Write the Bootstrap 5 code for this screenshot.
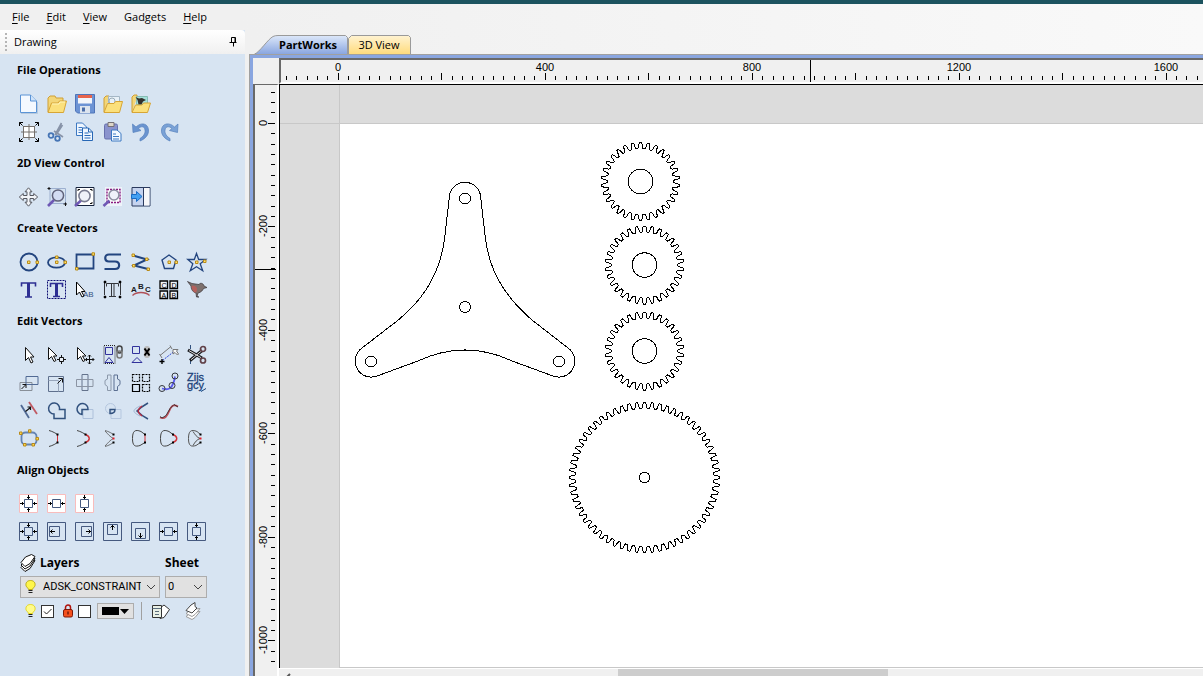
<!DOCTYPE html>
<html lang="en">
<head>
<meta charset="utf-8">
<meta name="viewport" content="width=device-width, initial-scale=1">
<title>PartWorks</title>
<link href="https://cdn.jsdelivr.net/npm/bootstrap@5.3.0/dist/css/bootstrap.min.css" rel="stylesheet">
<style>
  body { font: 11px/16px "Open Sans", "Noto Sans", sans-serif; color: #000; background: #f0f0f0; }
  .titlestrip { height: 4px; background: #1c535f; }
  .menubar { height: 26px; padding-left: 12px; gap: 17px; background: linear-gradient(90deg, #f0f0f0 20%, #f9f9f9); }
  .menubar a { color: #000; text-decoration: none; }
  .menubar u { text-underline-offset: 2px; }
  .sidepanel { width: 245px; background: #d7e4f2; }
  .panelhead { height: 24px; padding: 0 7px 0 5px; background: linear-gradient(#fff, #f0f0f0); border-top-right-radius: 4px; }
  .grip { width: 2px; height: 18px; margin-right: 7px; background: repeating-linear-gradient(#b5b5b5 0 2px, transparent 2px 4px); }
  .plainbtn { border: 0; background: none; padding: 0; }
  .toolset h2 { font-size: 11px; line-height: 16px; font-weight: 700; margin: 0 0 12px; padding-left: 17px; }
  .toolset { padding-top: 8px; }
  .toolset + .toolset { padding-top: 9px; }
  .toolgrid { display: grid; grid-template-columns: repeat(7, 28px); padding-left: 15px; }
  .toolgrid button { border: 0; background: none; padding: 4px; width: 28px; height: 28px; line-height: 0; }
  .toolgrid button:hover { background: #c3d8f0; }
  svg { display: block; overflow: visible; }
  .toolgrid svg { width: 20px; height: 20px; fill: none; stroke-width: 1; }
  .layerbox { padding: 8px 38px 0 20px; }
  .layerbox label.cap { font-size: 12px; font-weight: 700; }
  .combo { height: 22px; padding: 0 18px 0 2px; font: 11px/20px Roboto, sans-serif; border: 1px solid #adadad; border-radius: 0; background-color: #e1e1e1; background-image: url("data:image/svg+xml,%3Csvg xmlns='http://www.w3.org/2000/svg' viewBox='0 0 10 6'%3E%3Cpath d='M1 1l4 4 4-4' fill='none' stroke='%23444'/%3E%3C/svg%3E"); background-size: 10px 6px; background-position: right 3px center; color: #000; text-overflow: clip; }
  .combo.layername { padding-left: 22px; }
  .bulb { position: absolute; left: 5px; top: 4px; pointer-events: none; }
  input.tick[type=checkbox] { width: 13px; height: 13px; margin: 0; border: 1px solid #333; border-radius: 0; background-color: #fff; }
  input.tick[type=checkbox]:checked { background-color: #fff; border-color: #333; background-size: 11px; background-image: url("data:image/svg+xml,%3Csvg xmlns='http://www.w3.org/2000/svg' viewBox='0 0 11 11'%3E%3Cpath d='M2 5.5l2.500 2.500L9.500 3' fill='none' stroke='%23222'/%3E%3C/svg%3E"); }
  .swatch { width: 37px; height: 16px; padding: 0 4px; background: #e1e1e1; border: 1px solid #adadad; }
  .swatch i { width: 17px; height: 8px; background: #000; }
  .divider { width: 1px; height: 18px; background: #a0a0a0; }
  .splitter { width: 4px; background: #f0f0f0; }
  .tabstrip { height: 24px; padding-left: 5px; background: linear-gradient(90deg, #f0f0f0, #f9f9f9); }
  .doctab { position: relative; height: 19px; line-height: 19px; border: 0; background: none; padding: 0; color: #000; }
  .doctab svg { position: absolute; left: 0; top: 0; z-index: -1; }
  .tabstrip, .doctab { isolation: isolate; }
  .doctab.current { width: 94px; padding-left: 14px; font-weight: 700; }
  .doctab.other { width: 62px; }
  .docframe { border-top: 1px solid #a0a0a0; border-left: 1px solid #a0a0a0; background: #8aa6e0; padding: 3px 0 0 3px; }
  .sheetgrid { display: grid; grid-template-columns: 26px minmax(0, 1fr); grid-template-rows: 26px minmax(0, 1fr) 8px; background: #f0f0f0; }
  .hruler { border-top: 2px solid #696969; border-left: 2px solid #696969; border-bottom: 2px solid #fff; overflow: hidden; }
  .vruler { border-top: 1px solid #696969; border-left: 2px solid #696969; border-right: 2px solid #fff; overflow: hidden; grid-row: span 2; }
  .hruler svg, .vruler svg, .canvas svg { width: 100%; height: 100%; overflow: hidden; }
  .rulertext { font: 11px "Liberation Sans", sans-serif; }
  .canvas { border-top: 1px solid #000; border-left: 1px solid #000; background: #dcdcdc; overflow: hidden; }
  .hscroll { background: #f0f0f0; border-top: 1px solid #fff; display: grid; grid-template-columns: 339px 270px 1fr; }
  .hscroll .thumb { background: #cdcdcd; border: 0; padding: 0; }
</style>
</head>
<body class="vh-100 d-flex flex-column overflow-hidden">
<div class="titlestrip flex-shrink-0"></div>
<nav class="menubar d-flex align-items-center flex-shrink-0">
  <a href="#"><u>F</u>ile</a><a href="#"><u>E</u>dit</a><a href="#"><u>V</u>iew</a><a href="#">Gadgets</a><a href="#"><u>H</u>elp</a>
</nav>
<div class="d-flex flex-grow-1" style="min-height:0">
  <aside class="sidepanel flex-shrink-0 overflow-hidden">
    <div class="panelhead d-flex align-items-center">
      <span class="grip"></span><span class="me-auto">Drawing</span>
      <button class="plainbtn" aria-label="Pin"><svg width="9" height="10" fill="none" stroke="#000"><path d="M2.500 0.500h4v5M2.500 0.500v5M0.500 5.500h7M4.500 5.500v4"/><path d="M6 1v5" /></svg></button>
    </div>

    <section class="toolset"><h2>File Operations</h2><div class="toolgrid">
      <button aria-label="New"><svg viewBox="0 0 20 20"><path d="M1.500 1h10l6 6v11.500h-16z" fill="#f4f9ff" stroke="#5b94d6"/><path d="M11.500 1v6h6" fill="#cfe3fa" stroke="#5b94d6"/><path d="M2 19.500h16.500V8" stroke="#a9bdd4" opacity=".7"/></svg></button>
      <button aria-label="Open"><svg viewBox="0 0 20 20"><path d="M1 18V4l2-2h5l1 2h7v3" fill="#f3d678" stroke="#cf9f35"/><path d="M1 18.500L4.500 9H11l1.500-2H19.500L16.500 18.500z" fill="#fbe07c" stroke="#d7a535"/><path d="M5 10h7l1-2h5" stroke="#fff3b8"/></svg></button>
      <button aria-label="Save"><svg viewBox="0 0 20 20"><path d="M.5 .5h19v18.500h-17l-2-2z" fill="#6c93d4" stroke="#4f74b8"/><path d="M3 1h14v8.500H3z" fill="#f2f5fa"/><path d="M3 1h14v3H3z" fill="#e8644c"/><path d="M5 12h10v7H5z" fill="#dce4ee"/><path d="M7 13.500h3v4H7z" fill="#4b6da8"/></svg></button>
      <button aria-label="Import vectors"><svg viewBox="0 0 20 20"><path d="M1 18V4l2-2h3v3" fill="#f3d678" stroke="#cf9f35"/><path d="M5.500 2.500h11v8h-11z" fill="#e8f1f8" stroke="#a5b7c6"/><circle cx="9" cy="7" r="3" stroke="#9badba"/><path d="M1 18.500L4.500 9.500H11l1.500-2H19.500L16.500 18.500z" fill="#fbe07c" stroke="#d7a535"/></svg></button>
      <button aria-label="Import bitmap"><svg viewBox="0 0 20 20"><path d="M1 18V3l2-2h3v3" fill="#f3d678" stroke="#cf9f35"/><path d="M5.500 2.500h11v8h-11z" fill="#a4dfd9" stroke="#86bdb5"/><path d="M4.500 3l3.500 1.500 3-.5 4 2-3 1.500-1.500 3h-3L6.500 6z" fill="#33302c"/><path d="M1 18.500L4.500 11H11l1.500-2H19.500L16.500 18.500z" fill="#fbe07c" stroke="#d7a535"/></svg></button>
    </div><div class="toolgrid">
      <button aria-label="Job setup"><svg viewBox="0 0 20 20"><path d="M4.500 4.500h11v11h-11z" fill="#fff"/><path d="M4.500 4v12M10 2v16M15.500 4v12M4 4.500h12M2 10h16M4 15.500h12" stroke="#75706c"/><path d="M.5 4V.5H4M.5 .5l3 3M16 .5h3.500V4M19.500 .5l-3 3M.5 16v3.500H4M.5 19.500l3-3M16 19.500h3.500V16M19.500 19.500l-3-3" stroke="#000"/></svg></button>
      <button aria-label="Cut"><svg viewBox="0 0 20 20"><path d="M14.500 1L8 13M15.500 3L9 13M7 9l9 6" stroke="#8793a8" stroke-width="1.600"/><circle cx="4" cy="13.500" r="2.400" stroke="#4675b5" stroke-width="1.800"/><circle cx="10.500" cy="16.500" r="2.300" stroke="#4675b5" stroke-width="1.800"/></svg></button>
      <button aria-label="Copy"><svg viewBox="0 0 20 20"><path d="M1.500 1h6l4 4v8.500h-10z" fill="#eef6ff" stroke="#3c78c2"/><path d="M3.500 5.500h4M3.500 8h6M3.500 10.500h6" stroke="#3c78c2"/><path d="M7.500 6h6l4 4v8.500h-10z" fill="#eef6ff" stroke="#2767b5"/><path d="M13.500 6v4h4M9.500 11h4M9.500 13.500h6M9.500 16h6" stroke="#2767b5"/></svg></button>
      <button aria-label="Paste"><svg viewBox="0 0 20 20"><rect x="1.500" y="2" width="13" height="15" rx="1.500" fill="#8a93cd" stroke="#6770ad"/><path d="M5 .5h6v4H5z" fill="#ddd6c9" stroke="#746f75"/><path d="M8.500 8h5.500l4 3.500v7.500H8.500z" fill="#f4f9ff" stroke="#3c78c2"/><path d="M10 12h3M10 14.500h6M10 17h6" stroke="#3c78c2"/></svg></button>
      <button aria-label="Undo"><svg viewBox="0 0 20 20"><path d="M1.500 2l.5 8.500 8-2-2.500-2C10 4 13.500 4 14 8c.5 4-2 6.500-5 8.500v2.500C14 17 18 13 17.500 8 17 1 10 0 5 5z" fill="#6a94d0" stroke="#5681bd" stroke-width=".7"/></svg></button>
      <button aria-label="Redo"><svg viewBox="0 0 20 20"><path d="M19 2L18.500 10.500l-8-2 2.500-2C10.500 4 6.500 4 6 8c-.5 4 2 6.500 5 8.500v2.500C6 17 2 13 2.500 8 3 1 10.500 0 15.500 5z" fill="#7aa2d6" stroke="#5681bd" stroke-width=".7"/></svg></button>
    </div></section>

    <section class="toolset"><h2>2D View Control</h2><div class="toolgrid">
      <button aria-label="Pan"><svg viewBox="0 0 20 20"><path fill="#f2f4f8" stroke="#55575f" d="M9.500 .8l3.500 4h-2v3.700h3.700v-2l4 3.500-4 3.500v-2H11v3.700h2l-3.500 4-3.500-4h2v-3.700H4.300v2l-4-3.500 4-3.500v2H8V4.800H6z"/></svg></button>
      <button aria-label="Zoom"><svg viewBox="0 0 20 20"><path d="M3 1.500h15.500v15H3z" stroke="#9db0d0"/><path d="M.5 1.500h3M2 0v3M16.500 17h3.500M18.500 15.500v3.500" stroke="#111"/><path d="M7 13l-6 6" stroke="#6e58b5" stroke-width="2.600"/><circle cx="11" cy="8.500" r="5.600" fill="#d3dcf2" stroke="#60627a" stroke-width="1.500"/></svg></button>
      <button aria-label="Zoom to drawing"><svg viewBox="0 0 20 20"><path d="M1 .5h18v18H1z" fill="#fff" stroke="#16233d"/><path d="M3 2.500h2M15 2.500h2M3 4V2.500M17 4V2.500M17 15v1.500h-2" stroke="#111"/><path d="M6 13.500l-6 5.500" stroke="#6e58b5" stroke-width="2.600"/><circle cx="9.500" cy="9" r="5.600" fill="#eff2fa" stroke="#7a7d92" stroke-width="1.600"/></svg></button>
      <button aria-label="Zoom to selection"><svg viewBox="0 0 20 20"><path d="M2 0h17v19H2z" fill="#eef3fa"/><path d="M4 2.500h13v13H4z" fill="#fff" stroke="#8b1a80" stroke-width="1.400" stroke-dasharray="2 1"/><path d="M6.500 13.500l-6 5.500" stroke="#6e58b5" stroke-width="2.600"/><circle cx="11" cy="8" r="5" fill="#eff2fa" stroke="#8c8fa2" stroke-width="1.600"/></svg></button>
      <button aria-label="Toggle view"><svg viewBox="0 0 20 20"><path d="M1 .5h18v18.500H1z" fill="#c5d3ef" stroke="#2a3a5e"/><path d="M12 1h6.500v17.500H12z" fill="#f7f7f9"/><path d="M12.500 1v18" stroke="#2a3a5e"/><path d="M.5 7.500h5V4.500l5.500 5-5.500 5v-3h-5z" fill="#43a0f2" stroke="#1b6cc4"/></svg></button>
    </div></section>

    <section class="toolset"><h2>Create Vectors</h2><div class="toolgrid">
      <button aria-label="Circle"><svg viewBox="0 0 20 20"><circle cx="10" cy="10" r="8.500" stroke="#23457f" stroke-width="1.800"/><path d="M8.500 9h2.500v2.500H8.500zM17 9h2.500v2.500H17z" fill="#ffe36b" stroke="#b88a19"/></svg></button>
      <button aria-label="Ellipse"><svg viewBox="0 0 20 20"><ellipse cx="9.500" cy="10.500" rx="8.500" ry="5.200" stroke="#23457f" stroke-width="1.800"/><path d="M8.500 9h2.500v2.500H8.500zM17 9h2.500v2.500H17zM8.500 4H11v2.500H8.500z" fill="#ffe36b" stroke="#b88a19"/></svg></button>
      <button aria-label="Rectangle"><svg viewBox="0 0 20 20"><path d="M1.500 2.500h17v14h-17z" stroke="#23457f" stroke-width="1.800"/><path d="M17 .8h2.500v2.500H17zM.5 15.500H3V18H.5z" fill="#ffe36b" stroke="#b88a19"/></svg></button>
      <button aria-label="Polyline"><svg viewBox="0 0 20 20"><path d="M18 2.500H6C1 2.500 1 9.500 6 9.500h6c5.500 0 5.500 7.500 0 7.500H1.500" stroke="#23457f" stroke-width="2.200"/></svg></button>
      <button aria-label="Curve"><svg viewBox="0 0 20 20"><path d="M2 3.500L16 7.500 3 13.500l14 3.500" stroke="#23457f" stroke-width="2"/><path d="M1 2h2.500v2.500H1zM14.500 6H17v2.500h-2.500zM1.500 12.500H4V15H1.500zM16 16h2.500v2.500H16z" fill="#ffe36b" stroke="#b88a19"/></svg></button>
      <button aria-label="Polygon"><svg viewBox="0 0 20 20"><path d="M10 3l7 5-2.500 8.500h-9L3 8z" stroke="#23457f" stroke-width="1.400"/><path d="M9 9h2.500v2.500H9zM16 9h2.500v2.500H16z" fill="#ffe36b" stroke="#b88a19"/></svg></button>
      <button aria-label="Star"><svg viewBox="0 0 20 20"><path d="M9.500 1.500l2.200 6h7l-5.500 4.200 2.500 7-6.200-4-6.200 4 2.500-7L.8 7.500h6.500z" stroke="#23457f" stroke-width="1.300"/><path d="M8.500 9H11v2.500H8.500zM16.500 8H19v2.500h-2.500z" fill="#ffe36b" stroke="#b88a19"/></svg></button>
      <button aria-label="Text"><svg viewBox="0 0 20 20"><path d="M2.500 6.500V3h14v3.500M6 17h7" stroke="#2e2f93" stroke-width="1.600"/><path d="M9.500 3v14" stroke="#2e2f93" stroke-width="3"/></svg></button>
      <button aria-label="Text in box"><svg viewBox="0 0 20 20"><path d="M.5 .5h18v18H.5z" stroke="#0c0c72" stroke-dasharray="2 1"/><path d="M3.500 7V3.500h12V7M9.500 3v13M6 16.500h7" stroke="#2e2f93" stroke-width="1.600"/><path d="M9.500 3v13" stroke="#2e2f93" stroke-width="3"/></svg></button>
      <button aria-label="Edit text"><svg viewBox="0 0 20 20"><text x="8" y="17" font-family="Liberation Sans, sans-serif" font-size="8" fill="#33507f">AB</text><path d="M1.500 2v13l3-3 2.500 5 2-1-2.500-4.500H10z" fill="#fff" stroke="#000"/></svg></button>
      <button aria-label="Transform text"><svg viewBox="0 0 20 20"><path d="M3.500 6.500V3.500h12v3M8.500 4v12M11 4v12M6 16.500h7M1.500 3v12M17.500 3v12" stroke="#34363b"/><path d="M1 1h2v2H1zM16 1h2v2h-2zM1 16h2v2H1zM16 16h2v2h-2z" fill="#000" stroke="#000" stroke-width=".5"/></svg></button>
      <button aria-label="Text on curve"><svg viewBox="0 0 20 20"><g font-family="Liberation Sans, sans-serif" font-size="8" font-weight="700" fill="#1b1b1e"><text x="0" y="12">A</text><text x="7" y="9">B</text><text x="14" y="12">C</text></g><path d="M1.500 15.500c4-4 13-4 17 0" stroke="#b05058" stroke-width="1.300"/></svg></button>
      <button aria-label="Text blocks"><svg viewBox="0 0 20 20"><path d="M1 1h7.500v7.500H1zM11 1h7.500v7.500H11zM1 11h7.500v7.500H1zM11 11h7.500v7.500H11z" stroke="#000" stroke-width="1.300" fill="#eef3fa"/><g font-family="Liberation Sans, sans-serif" font-size="7" fill="#000"><text x="2.500" y="7.500">C</text><text x="12.500" y="7.500">D</text><text x="2.500" y="17.500">A</text><text x="12.500" y="17.500">B</text></g></svg></button>
      <button aria-label="Clipart"><svg viewBox="0 0 20 20"><path d="M.5 1.500L5 3.500l7 1C13 2.500 16.500 3 17 6l3 1.500-3.500 1C16 10 14 12.500 11 13l-1 3.500 2 .5H9.500l-.5-4C5 12 4 8 4 6z" fill="#7d706d" stroke="#39353a" stroke-width=".7"/><path d="M4.500 6C8 5 10.500 7 10 10s-2 3-3 2-2.500-3-2.500-6z" fill="#b5605c"/></svg></button>
    </div></section>

    <section class="toolset"><h2>Edit Vectors</h2><div class="toolgrid">
      <button aria-label="Select"><svg viewBox="0 0 20 20"><path d="M6.500 2.500v13l3-3 2.500 5.500 2-1-2.500-5H15z" fill="#fff" stroke="#111"/></svg></button>
      <button aria-label="Edit nodes"><svg viewBox="0 0 20 20"><path d="M1.500 2.500v12l3-3 2.500 5 2-1-2.500-4.500H10z" fill="#fff" stroke="#111"/><path d="M14.500 10v9M10 14.500h9" stroke="#111"/><path d="M12.500 12.500h4v4h-4z" fill="#e8eef6" stroke="#111"/></svg></button>
      <button aria-label="Transform"><svg viewBox="0 0 20 20"><path d="M2.500 2.500v12l3-3 2.500 5 2-1-2.500-4.500H11z" fill="#fff" stroke="#111"/><path d="M14.500 10v9M10.500 14.500h8.500M13 11.500l1.500-1.500 1.500 1.500M13 17.500l1.500 1.500 1.500-1.500M12 13l-1.500 1.500L12 16M17.500 13l1.500 1.500-1.500 1.500" stroke="#111"/></svg></button>
      <button aria-label="Group"><svg viewBox="0 0 20 20"><path d="M1 .5h11v18H1z" stroke="#222" stroke-dasharray="1 1"/><path d="M2.500 2.500h7v7h-7zM6 12.500L2 17.500h8z" stroke="#32329c"/><rect x="14" y="1" width="5" height="7" rx="2.500" stroke="#444" stroke-width="1.500"/><rect x="14" y="6" width="5" height="7" rx="2.500" stroke="#777" stroke-width="1.500"/></svg></button>
      <button aria-label="Ungroup"><svg viewBox="0 0 20 20"><path d="M1.500 1.500h7v7h-7zM6 12.500l-5 5h10z" stroke="#32329c"/><rect x="13" y="1" width="6" height="12" rx="3" fill="#bbb"/><path d="M13.500 3.500l5 7M18.500 3.500l-5 7" stroke="#000" stroke-width="2"/></svg></button>
      <button aria-label="Measure"><svg viewBox="0 0 20 20"><path d="M1 10.500L12 1.500M.5 9l2.500 4M11 .5l2 3.500" stroke="#777"/><path d="M3.500 15.500L15 6.500" stroke="#2e45d8" stroke-dasharray="2 1"/><path d="M.5 16.500h5M3 14v5" stroke="#000" stroke-width="1.400"/><path d="M14 4.500h5l-1.500 1.500 2 3-1 1-2.500-2.500L14 9z" fill="#f8f8f8" stroke="#777"/></svg></button>
      <button aria-label="Trim"><svg viewBox="0 0 20 20"><path d="M3.500 0v4M3.500 14v5" stroke="#31517e"/><path d="M1 5l14 8M3 15.500L15 5.500" stroke="#17181c" stroke-width="3"/><path d="M2 5.600l12 7M4 14.700L15 5.500" stroke="#ddd"/><circle cx="16" cy="4" r="2.500" stroke="#604048" stroke-width="1.700"/><circle cx="16" cy="15.500" r="2.500" stroke="#604048" stroke-width="1.700"/></svg></button>
      <button aria-label="Move"><svg viewBox="0 0 20 20"><path d="M1 9.500h12v8H1z" stroke="#888f98"/><path d="M7 3.500h12v8H7z" stroke="#516a94"/><path d="M2.500 16l4-4M3.500 11.500h3.500v3.500" stroke="#111"/></svg></button>
      <button aria-label="Set size"><svg viewBox="0 0 20 20"><path d="M1.500 3.500h15v15h-15z" stroke="#5f708d"/><path d="M1.500 7.500h10v11" stroke="#97a5ba"/><path d="M10.500 10.500l4-4M11.500 5.500h4v4" stroke="#111"/></svg></button>
      <button aria-label="Mirror vertical"><svg viewBox="0 0 20 20"><path d="M7 1.500h6v16H7z" stroke="#64738c"/><path d="M1.500 6.500h16.500v7H1.500z" stroke="#8b94a3"/></svg></button>
      <button aria-label="Mirror"><svg viewBox="0 0 20 20"><path d="M8 2v15.500H4.500v-4L2 11.500v-4L4.500 6V2z" stroke="#8b98aa"/><path d="M11 2v15.500h3.500v-4l2.500-2v-4L14.500 6V2z" stroke="#5b6f91"/></svg></button>
      <button aria-label="Array copy"><svg viewBox="0 0 20 20"><path d="M1.500 1.500h7v7h-7zM11.500 1.500h7v7h-7zM11.500 11.500h7v7h-7z" stroke="#000" stroke-dasharray="2 1" stroke-width="1.200"/><path d="M1.500 11.500h7v7h-7z" stroke="#000" stroke-width="1.200"/></svg></button>
      <button aria-label="Copy along curve"><svg viewBox="0 0 20 20"><path d="M3 15.500c6 2 11 1 13-12" stroke="#5a5af0" stroke-width="1.800"/><circle cx="3" cy="15.500" r="3" stroke="#34373e"/><circle cx="13" cy="12.500" r="3" stroke="#34373e"/><circle cx="16" cy="3" r="3" stroke="#34373e"/></svg></button>
      <button aria-label="Nesting"><svg viewBox="0 0 20 20"><g font-family="Liberation Sans, sans-serif" font-size="11" fill="#1d4279" stroke="#1d4279" stroke-width=".3"><text x="0" y="8">Zijs</text><text x="0" y="16">gcy</text></g><path d="M14 18.500l5-3" stroke="#1d4279"/></svg></button>
      <button aria-label="Offset"><svg viewBox="0 0 20 20"><path d="M2 4l8 13" stroke="#516a94" stroke-width="1.800"/><path d="M10 1l8 12" stroke="#c05a63" stroke-width="1.800"/><path d="M6.500 10.500l5-4M8.500 6h3v3" stroke="#111" stroke-width="1.200"/></svg></button>
      <button aria-label="Weld"><svg viewBox="0 0 20 20"><path d="M7 13.500v4h11V8.500h-5.500A5.500 5.500 0 1 0 7 13z" stroke="#31517e" stroke-width="1.500"/></svg></button>
      <button aria-label="Subtract"><svg viewBox="0 0 20 20"><path d="M8 8.500h10v9H8z" stroke="#adc0da"/><path d="M7 13.500V8.500h6A5.500 5.500 0 1 0 7 13.500z" stroke="#31517e" stroke-width="1.500"/></svg></button>
      <button aria-label="Overlap"><svg viewBox="0 0 20 20"><path d="M8 8.500h10v9H8z" stroke="#b5c7df"/><circle cx="7.500" cy="7.500" r="5" stroke="#b5c7df"/><path d="M7 8.500h5c0 3-2 4-5 4z" stroke="#31517e" stroke-width="1.400"/></svg></button>
      <button aria-label="Fit curves"><svg viewBox="0 0 20 20"><path d="M17 2C10 6 8 8 6 10c2 2 5 5 11 8" stroke="#31517e" stroke-width="1.600"/><path d="M9 5c-8 4-8 6 0 10" stroke="#9db3d0"/><path d="M11 5C6 9 6 11 11 15" stroke="#b42c42" stroke-width="1.500"/></svg></button>
      <button aria-label="Smooth"><svg viewBox="0 0 20 20"><path d="M1 16.500c5 2 7-1 9-6s4-8 9-5" stroke="#c0505a" stroke-width="1.800"/><path d="M1 15.500l2 1.500 4-2.500 4-7 4-4 4 2.500" stroke="#222" stroke-width=".8"/></svg></button>
      <span></span>
      <button aria-label="Node editing"><svg viewBox="0 0 20 20"><rect x="2.500" y="3.500" width="15" height="12" rx="4" stroke="#6584b2" stroke-width="1.800"/><path d="M.5 3H3v2.500H.5zM9.500 .8H12v2.500H9.500zM17 8.500h2.500V11H17zM4.500 14.500H7V17H4.500zM13 14.500h2.500V17H13z" fill="#ffd84b" stroke="#b88a19"/></svg></button>
      <button aria-label="Join with line"><svg viewBox="0 0 20 20"><path d="M2 1.500c4 1 7 3 8.500 4M2 17.500c4-1 7-3 8.500-4" stroke="#444"/><path d="M10.500 5.500v8" stroke="#d03037"/><path d="M9.500 4.500h2v2h-2zM9.500 12.500h2v2h-2z" fill="#000"/></svg></button>
      <button aria-label="Join with curve"><svg viewBox="0 0 20 20"><path d="M2 1.500c4 1 7 3 8.500 4M2 17.500c4-1 7-3 8.500-4" stroke="#444"/><path d="M10.500 5.500c5 2 5 6 0 8" stroke="#d03037" stroke-width="1.400"/><path d="M9.500 4.500h2v2h-2zM9.500 12.500h2v2h-2z" fill="#000"/></svg></button>
      <button aria-label="Join moving ends"><svg viewBox="0 0 20 20"><path d="M2 1.500c4 1 7 3 8.500 4M2 17.500c4-1 7-3 8.500-4M2 2c3 3 5 6 8.500 7.500M2 17c3-3 5-6 8.500-7.500" stroke="#555" stroke-width=".8"/><path d="M9.500 4.500h2v2h-2zM9.500 12.500h2v2h-2z" fill="#000"/><path d="M9.500 8.500h2v2h-2z" fill="#e0202a"/></svg></button>
      <button aria-label="Close with line"><svg viewBox="0 0 20 20"><path d="M14 5.500L10 2.500C4 0 1.500 2 1.500 9.500S4 18 9 16.500l5-3" stroke="#444"/><path d="M14 5.500v8" stroke="#d03037"/><path d="M13 4.500h2v2h-2zM13 12.500h2v2h-2z" fill="#000"/></svg></button>
      <button aria-label="Close with curve"><svg viewBox="0 0 20 20"><path d="M14 5.500L10 2.500C4 0 1.500 2 1.500 9.500S4 18 9 16.500l5-3" stroke="#444"/><path d="M14 5.500c5 2 5 6 0 8" stroke="#d03037" stroke-width="1.400"/><path d="M13 4.500h2v2h-2zM13 12.500h2v2h-2z" fill="#000"/></svg></button>
      <button aria-label="Close moving ends"><svg viewBox="0 0 20 20"><path d="M13.500 5.500L10 2.500C4 0 1.500 2 1.500 9.500S4 18 9 16.500l4.500-3M6 2.500c2 3 4 6 7 7-3 1-5 3.500-7 7" stroke="#555"/><path d="M12.500 4.500h2v2h-2zM12.500 12.500h2v2h-2z" fill="#000"/><path d="M12.500 8.500h2v2h-2z" fill="#e0202a"/></svg></button>
    </div></section>

    <section class="toolset"><h2>Align Objects</h2><div class="toolgrid">
      <button aria-label="Centre in job"><svg viewBox="0 0 20 20"><path d="M.5 .5h18v18H.5z" fill="#fff" stroke="#f9bcbc"/><path d="M5.500 5.500h8v8h-8z" stroke="#45597f"/><path d="M9.500 1v4M9.500 14v4M1 9.500h4M14 9.500h4M8 3.500h3M8 15.500h3M3.500 8v3M15.500 8v3" stroke="#000"/></svg></button>
      <button aria-label="Centre in job horizontally"><svg viewBox="0 0 20 20"><path d="M.5 .5h18v18H.5z" fill="#fff" stroke="#f9bcbc"/><path d="M5.500 5.500h8v8h-8z" stroke="#45597f"/><path d="M1 9.500h4M14 9.500h4M3.500 8v3M15.500 8v3" stroke="#000"/></svg></button>
      <button aria-label="Centre in job vertically"><svg viewBox="0 0 20 20"><path d="M.5 .5h18v18H.5z" fill="#fff" stroke="#f9bcbc"/><path d="M5.500 5.500h8v8h-8z" stroke="#45597f"/><path d="M9.500 1v4M9.500 14v4M8 3.500h3M8 15.500h3" stroke="#000"/></svg></button>
    </div><div class="toolgrid">
      <button aria-label="Align centres"><svg viewBox="0 0 20 20" stroke="#45597f"><path d="M.5 .5h18v18H.5z"/><path d="M5.500 5.500h8v8h-8z"/><path d="M9.500 1v4M9.500 14v4M1 9.500h4M14 9.500h4M8 3.500h3M8 15.500h3M3.500 8v3M15.500 8v3" stroke="#000"/></svg></button>
      <button aria-label="Align left"><svg viewBox="0 0 20 20" stroke="#45597f"><path d="M.5 .5h18v18H.5z"/><path d="M2.500 4.500h10v10h-10z"/><path d="M3 9.500h5M5.500 7.500l-2 2 2 2" stroke="#000"/></svg></button>
      <button aria-label="Align right"><svg viewBox="0 0 20 20" stroke="#45597f"><path d="M.5 .5h18v18H.5z"/><path d="M6.500 4.500h10v10h-10z"/><path d="M11 9.500h5M13.500 7.500l2 2-2 2" stroke="#000"/></svg></button>
      <button aria-label="Align top"><svg viewBox="0 0 20 20" stroke="#45597f"><path d="M.5 .5h18v18H.5z"/><path d="M4.500 2.500h10v10h-10z"/><path d="M9.500 3v5M7.500 5.500l2-2 2 2" stroke="#000"/></svg></button>
      <button aria-label="Align bottom"><svg viewBox="0 0 20 20" stroke="#45597f"><path d="M.5 .5h18v18H.5z"/><path d="M4.500 6.500h10v10h-10z"/><path d="M9.500 11v5M7.500 13.500l2 2 2-2" stroke="#000"/></svg></button>
      <button aria-label="Align horizontal centres"><svg viewBox="0 0 20 20" stroke="#45597f"><path d="M.5 .5h18v18H.5z"/><path d="M5.500 5.500h8v8h-8z"/><path d="M1 9.500h4M14 9.500h4M3.500 8v3M15.500 8v3" stroke="#000"/></svg></button>
      <button aria-label="Align vertical centres"><svg viewBox="0 0 20 20" stroke="#45597f"><path d="M.5 .5h18v18H.5z"/><path d="M5.500 5.500h8v8h-8z"/><path d="M9.500 1v4M9.500 14v4M8 3.500h3M8 15.500h3" stroke="#000"/></svg></button>
    </div></section>

    <div class="layerbox">
      <div class="d-flex align-items-center">
        <svg width="16" height="18" fill="#fff" stroke="#111"><path d="M1 13.500L5.500 9 15 6.500l-5 8L5 17.500z"/><path d="M1 11L5.500 6.500 15 4.500l-5 7.500-5 3z"/><path d="M1 8.500L5.500 3l6-2.500 3.500 2-5 7-5 3z"/></svg>
        <label class="cap me-auto ps-1" for="layer">Layers</label>
        <label class="cap pe-2" for="sheet">Sheet</label>
      </div>
      <div class="d-flex" style="gap:5px;margin-top:4px">
        <div class="position-relative" style="width:140px">
          <select id="layer" class="form-select combo layername"><option>ADSK_CONSTRAINTS</option></select>
          <svg class="bulb" width="11" height="14"><path d="M5.500 .5C2 .5 .5 3 1 5.500c.5 2 2 2 2.500 4h4c.5-2 2-2 2.500-4C10.500 3 9 .5 5.500 .5z" fill="#fff64a" stroke="#b9ab16"/><path d="M3.500 10.500h4M3.500 12.500h4" stroke="#222"/></svg>
        </div>
        <select id="sheet" class="form-select combo" style="width:42px"><option>0</option></select>
      </div>
      <div class="d-flex align-items-center" style="margin-top:3px;height:20px;padding-left:5px">
        <svg width="11" height="14"><path d="M5.500 .5C2 .5 .5 3 1 5.500c.5 2 2 2 2.500 4h4c.5-2 2-2 2.500-4C10.500 3 9 .5 5.500 .5z" fill="#fffb8a" stroke="#e3d51b"/><path d="M3.500 10.500h4M3.500 12.500h4" stroke="#222"/></svg>
        <input type="checkbox" class="form-check-input tick" aria-label="Visible" checked style="margin-left:5px">
        <svg width="10" height="14" style="margin-left:9px"><path d="M2.500 6V3.500a2.500 2.500 0 0 1 5 0V6" fill="none" stroke="#b0120c" stroke-width="1.500"/><rect x=".5" y="5.500" width="9" height="7.500" rx="1.500" fill="#f4501e" stroke="#7d1908"/><path d="M5 7.500v3" stroke="#300"/></svg>
        <input type="checkbox" class="form-check-input tick" aria-label="Locked" style="margin-left:5px">
        <button class="swatch d-flex align-items-center justify-content-between" aria-label="Layer colour" style="margin-left:6px"><i></i><svg width="9" height="5"><path d="M0 0h9L4.500 5z"/></svg></button>
        <span class="divider" style="margin-left:7px"></span>
        <button class="plainbtn" aria-label="Layer manager" style="margin-left:10px"><svg width="19" height="17" stroke="#333" fill="#fff"><path d="M8 5l4-3 5.500 4.500-5.500 8-4 1z"/><path d="M.5 2.500h9v12h-9z" fill="#e9f0e6"/><path d="M.5 5.500h9M3 8.500h4M3 11.500h4" stroke="#5b6d7c"/></svg></button>
        <button class="plainbtn" aria-label="Move to layer" style="margin-left:14px"><svg width="16" height="18" fill="#fff" stroke="#9a9a9a"><path d="M1 14.500l5-4 9-1-5 6-3 2z"/><path d="M1 11.500l5-4 9-1-5 6-3 2z"/><path d="M1 8.500l5-5.500 4-2.500v4l2 1.500-5 5z" stroke="#444"/></svg></button>
      </div>
    </div>
  </aside>
  <div class="splitter flex-shrink-0"></div>
  <main class="flex-grow-1 d-flex flex-column" style="min-width:0">
    <div class="tabstrip d-flex align-items-end flex-shrink-0">
      <button class="doctab current"><svg width="94" height="19"><defs><linearGradient id="gb" x2="0" y2="1"><stop stop-color="#dde8fa"/><stop offset="1" stop-color="#8aa6e0"/></linearGradient><linearGradient id="gy" x2="0" y2="1"><stop stop-color="#fff3d2"/><stop offset="1" stop-color="#ffdb7c"/></linearGradient></defs><path d="M.5 19C5 18 14 4 19 1.500Q21 .5 24 .5H91.500L93.500 2.500V19" fill="url(#gb)" stroke="#9a9a9a"/></svg>PartWorks</button>
      <button class="doctab other"><svg width="63" height="19"><path d="M.5 19V3.500L3.500 .5H60.500L62.500 2.500V19" fill="url(#gy)" stroke="#9a9a9a"/></svg>3D View</button>
    </div>
    <div class="docframe flex-grow-1 d-flex" style="min-height:0">
      <div class="sheetgrid flex-grow-1">
        <div></div>
        <div class="hruler"><svg id="hruler" class="rulertext"></svg></div>
        <div class="vruler"><svg id="vruler" class="rulertext"></svg></div>
        <div class="canvas"><svg>
          <rect x="59" y="38" width="3000" height="545" fill="#fff"/>
          <path d="M59.500 0V3000M0 38.500H3000M59.500 582.500H3000" stroke="#c8c8c8"/>
          <g id="parts" fill="none" stroke="#000" shape-rendering="crispEdges" transform="translate(-280 -85)">
            <path d="M449.500 195.500A15.700 15.700 0 0 1 480.500 195.500L485 235C489 275 509 300 532 320L568 348A16 16 0 0 1 553 376L512 361C480 346 450 346 418 361L377 376A16 16 0 0 1 362 348L397 321C421 302 441 275 445 235Z"/>
            <circle cx="465" cy="198.500" r="5.500"/><circle cx="465" cy="307" r="5.500"/>
            <circle cx="371" cy="361.500" r="5.500"/><circle cx="559" cy="361.500" r="5.500"/>
          </g>
        </svg></div>
        <div class="hscroll"><svg width="20" height="7" fill="none" stroke="#555" stroke-width="2"><path d="M11 5L7 9"/></svg><button class="thumb" aria-label="Scroll"></button></div>
      </div>
    </div>
  </main>
</div>
<script src="https://cdn.jsdelivr.net/npm/bootstrap@5.3.0/dist/js/bootstrap.bundle.min.js"></script>
<script>
  const NS = 'http://www.w3.org/2000/svg';
  const add = (parent, tag, attrs, text) => {
    const el = document.createElementNS(NS, tag);
    for (const k in attrs) el.setAttribute(k, attrs[k]);
    if (text !== undefined) el.textContent = text;
    parent.appendChild(el);
  };
  const STEP = 10.35; // pixels for 20 drawing units
  const h = document.getElementById('hruler'), v = document.getElementById('vruler');
  const wide = h.parentNode.clientWidth, tall = v.parentNode.clientHeight;
  for (let k = -5; 57.3 + k * STEP < wide; k++) {
    const x = Math.floor(57.3 + k * STEP), len = k % 10 === 0 ? 7 : 4;
    add(h, 'rect', { x, y: 20 - len, width: 1, height: len });
    if (k % 20 === 0) add(h, 'text', { x, y: 11, 'text-anchor': 'middle' }, k * 20);
  }
  for (let k = -3; 48 + k * STEP < tall; k++) {
    const y = Math.floor(38.3 + k * STEP), len = k % 10 === 0 ? 7 : 4;
    add(v, 'rect', { x: 20 - len, y, width: len, height: 1 });
    if (k % 10 === 0) add(v, 'text', { x: 0, y: 0, 'text-anchor': 'middle', transform: `translate(12 ${y}) rotate(-90)` }, -k * 20 || 0);
  }
  add(h, 'rect', { x: 529, y: 0, width: 1, height: 22 });
  add(v, 'rect', { x: 0, y: 184, width: 21, height: 1 });

  function gear(cx, cy, teeth, tip, root, bore) {
    const pts = [], p = 2 * Math.PI / teeth;
    for (let i = 0; i < teeth; i++)
      for (const [f, r] of [[-.37, root], [-.26, root + 1.5], [-.2, tip - 1.5], [-.12, tip], [.12, tip], [.2, tip - 1.5], [.26, root + 1.5], [.37, root]]) {
        const a = (i + f) * p;
        pts.push((cx + r * Math.sin(a)).toFixed(1) + ',' + (cy - r * Math.cos(a)).toFixed(1));
      }
    const g = document.getElementById('parts');
    add(g, 'polygon', { points: pts.join(' ') });
    add(g, 'circle', { cx, cy, r: bore });
  }
  gear(640.5, 181.5, 30, 39, 33, 12.3);
  gear(644.5, 265, 30, 39, 33, 12.3);
  gear(644.5, 351, 30, 39, 33, 12.3);
  gear(644.5, 477.5, 60, 75, 69, 5.3);
</script>
</body>
</html>
